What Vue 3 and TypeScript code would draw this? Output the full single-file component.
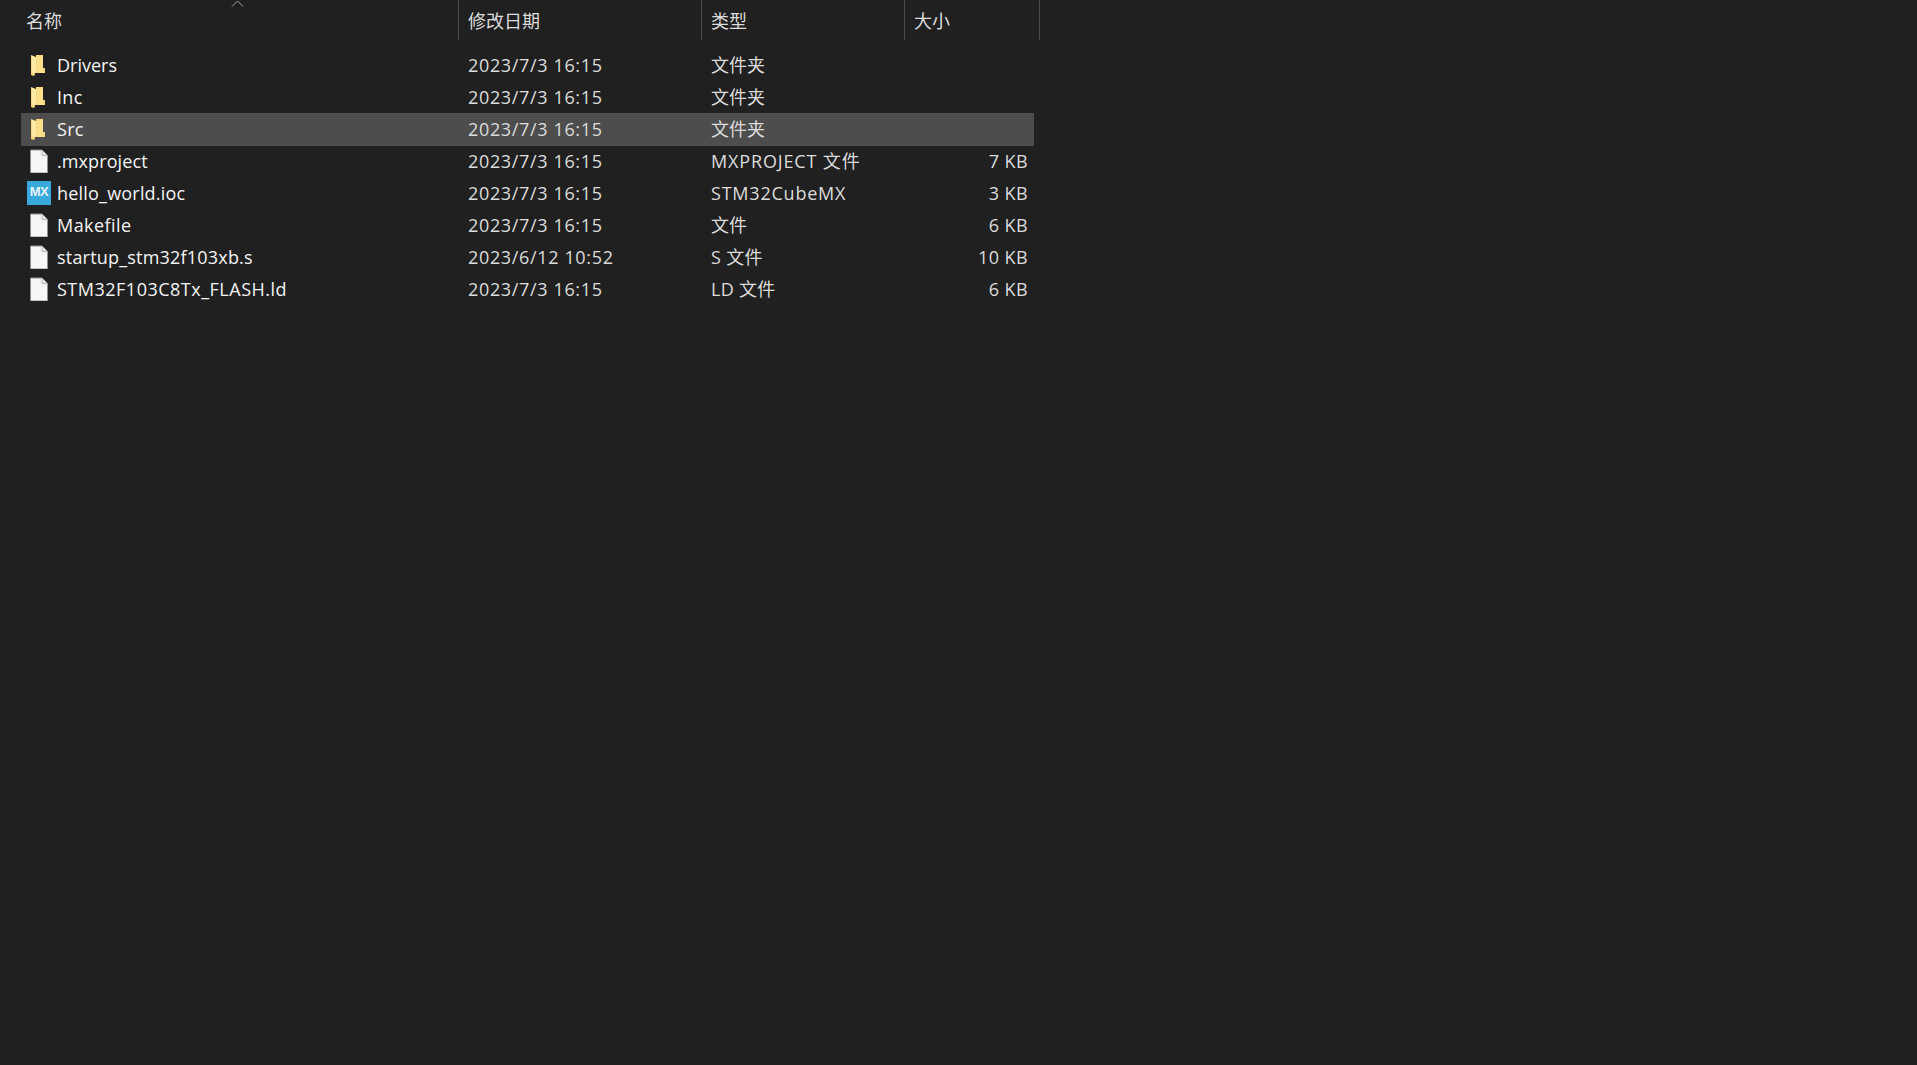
<script setup lang="ts">
interface Row {
  name: string
  date: string
  type: string
  size: string
  icon: 'folder' | 'file' | 'mx'
  nameTrack: number
  typeTrack: number
  selected?: boolean
}
const rows: Row[] = [
  { name: 'Drivers', date: '2023/7/3 16:15', type: '文件夹', size: '', icon: 'folder', nameTrack: 0, typeTrack: 0 },
  { name: 'Inc', date: '2023/7/3 16:15', type: '文件夹', size: '', icon: 'folder', nameTrack: 0.3, typeTrack: 0 },
  { name: 'Src', date: '2023/7/3 16:15', type: '文件夹', size: '', icon: 'folder', nameTrack: 0.3, typeTrack: 0, selected: true },
  { name: '.mxproject', date: '2023/7/3 16:15', type: 'MXPROJECT 文件', size: '7 KB', icon: 'file', nameTrack: 0.1, typeTrack: 0.85 },
  { name: 'hello_world.ioc', date: '2023/7/3 16:15', type: 'STM32CubeMX', size: '3 KB', icon: 'mx', nameTrack: 0.2, typeTrack: 0.78 },
  { name: 'Makefile', date: '2023/7/3 16:15', type: '文件', size: '6 KB', icon: 'file', nameTrack: 0.45, typeTrack: 0 },
  { name: 'startup_stm32f103xb.s', date: '2023/6/12 10:52', type: 'S 文件', size: '10 KB', icon: 'file', nameTrack: 0.2, typeTrack: 0.3 },
  { name: 'STM32F103C8Tx_FLASH.ld', date: '2023/7/3 16:15', type: 'LD 文件', size: '6 KB', icon: 'file', nameTrack: 0.5, typeTrack: 0.3 },
]
</script>

<template>
  <div class="page">
    <div class="header">
      <div class="hcell hname">名称
        <svg class="sort" width="13" height="7" viewBox="0 0 13 7"><path d="M1 6.5 L6.5 1 L12 6.5" fill="none" stroke="#a0a0a0" stroke-width="1"/></svg>
      </div>
      <div class="hcell hdate">修改日期</div>
      <div class="hcell htype">类型</div>
      <div class="hcell hsize">大小</div>
    </div>
    <div class="list">
      <div v-for="r in rows" :key="r.name" class="row" :class="{ selected: r.selected }">
        <div class="cname">
          <span class="icon">
            <svg v-if="r.icon === 'folder'" width="24" height="24" viewBox="0 0 24 24">
              <path d="M4 2 H16 V15 H18 V20 H9 V2 Z" fill="#f9d878"/>
              <path d="M10 4 H16 V20 H10 Z" fill="#fbdf8c"/>
              <path d="M4 2 L9 4 V20 H8 V22 L6 23 L4 22 Z" fill="#f0cc70"/>
              <path d="M4.6 2.6 L9 4.4 V19 L6.5 20.5 L4.6 20 Z" fill="#fde9a8"/>
            </svg>
            <svg v-else-if="r.icon === 'file'" width="24" height="24" viewBox="0 0 24 24">
              <path d="M3.5 1.5 H15 L20.5 7 V24.5 H3.5 Z" transform="translate(0 -0.5)" fill="#f6f6f8" stroke="#8e8e8e" stroke-width="1"/>
              <path d="M15 1 V6.5 H20.5" fill="#e4e4e6" stroke="#b5b5b5" stroke-width="1"/>
            </svg>
            <span v-else class="mx">MX</span>
          </span>
          <span class="ntext" :style="{ letterSpacing: r.nameTrack + 'px' }">{{ r.name }}</span>
        </div>
        <div class="cdate">{{ r.date }}</div>
        <div class="ctype" :style="{ letterSpacing: r.typeTrack + 'px' }">{{ r.type }}</div>
        <div class="csize">{{ r.size }}</div>
      </div>
    </div>
  </div>
</template>

<style>
html, body { margin: 0; background: #202020; }
</style>

<style scoped>
.page {
  width: 1917px;
  height: 1065px;
  background: #202020;
  overflow: hidden;
  font-family: "Open Sans", "Noto Sans CJK SC", sans-serif;
  font-size: 18px;
  color: #dcdcdc;
}
.header {
  display: flex;
  height: 40px;
  width: 1040px;
  box-sizing: border-box;
  border-right: 1px solid #4b4b4b;
}
.hcell {
  box-sizing: border-box;
  line-height: 40px;
  padding-left: 9px;
  border-right: 1px solid #4b4b4b;
  color: #dcdcdc;
  font-family: "Noto Sans CJK SC", sans-serif;
}
.hname { width: 459px; padding-left: 26px; position: relative; }
.hdate { width: 243px; }
.htype { width: 203px; }
.hsize { width: 134px; border-right: none; }
.sort { position: absolute; left: 231px; top: 0; }
.list { margin-top: 9px; margin-left: 21px; width: 1013px; }
.row {
  display: flex;
  height: 32px;
  line-height: 32px;
  align-items: flex-start;
}
.row.selected { background: #4d4d4d; height: 33px; margin-bottom: -1px; }
.cname { width: 437px; display: flex; align-items: flex-start; }
.icon { width: 24px; height: 24px; margin: 4px 6px 0; display: flex; flex: none; }
.mx {
  width: 24px;
  height: 24px;
  background: #38a9dc;
  color: #e8f4fa;
  font-family: "Liberation Sans", sans-serif;
  font-size: 13px;
  letter-spacing: -0.5px;
  font-weight: 700;
  text-align: center;
  line-height: 22px;
}
.ntext { color: #f4f4f4; }
.cdate { width: 243px; padding-left: 10px; box-sizing: border-box; letter-spacing: 0.65px; }
.ctype { width: 202px; padding-left: 10px; box-sizing: border-box; }
.csize { width: 131px; padding-right: 6px; box-sizing: border-box; text-align: right; letter-spacing: 0.4px; }
</style>
